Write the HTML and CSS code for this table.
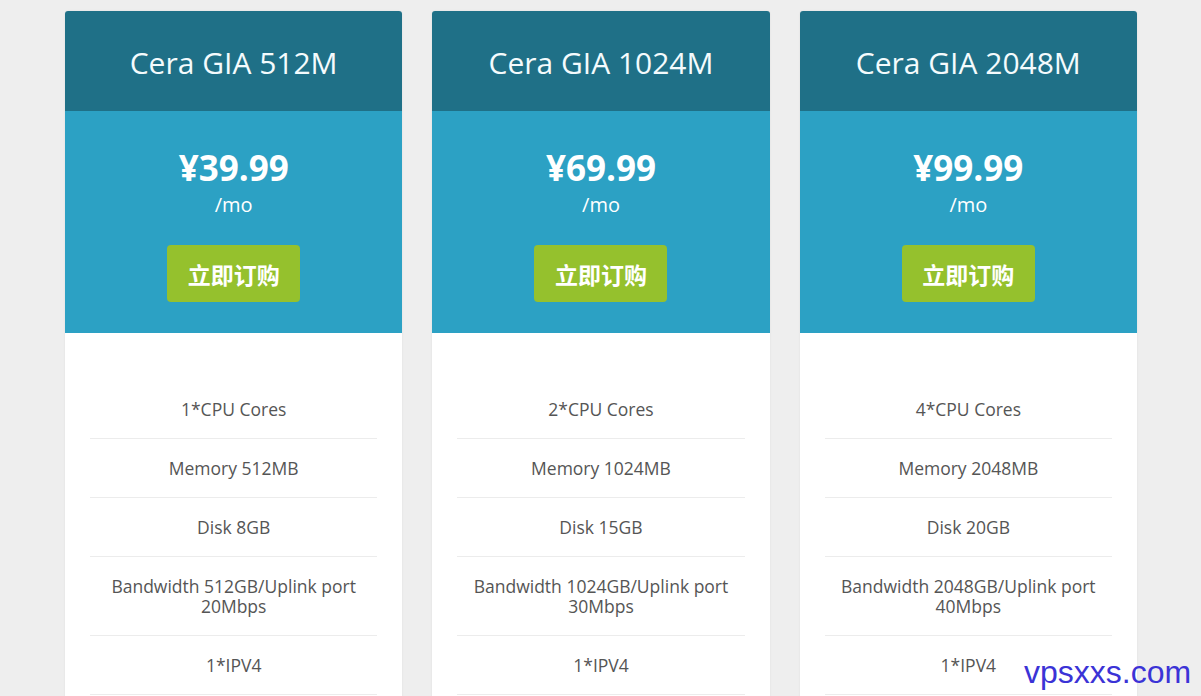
FILE: index.html
```html
<!DOCTYPE html>
<html lang="zh">
<head>
<meta charset="utf-8">
<title>Cera GIA</title>
<link rel="stylesheet" href="styles.css">
</head>
<body>
<div class="plans">
  <div class="card">
    <div class="card-head">Cera GIA 512M</div>
    <div class="card-price">
      <div class="price">¥39.99</div>
      <div class="period">/mo</div>
      <a class="buy">立即订购</a>
    </div>
    <ul class="features">
      <li>1*CPU Cores</li>
      <li>Memory 512MB</li>
      <li>Disk 8GB</li>
      <li>Bandwidth 512GB/Uplink port<br>20Mbps</li>
      <li>1*IPV4</li>
      <li>&nbsp;</li>
    </ul>
  </div>
  <div class="card">
    <div class="card-head">Cera GIA 1024M</div>
    <div class="card-price">
      <div class="price">¥69.99</div>
      <div class="period">/mo</div>
      <a class="buy">立即订购</a>
    </div>
    <ul class="features">
      <li>2*CPU Cores</li>
      <li>Memory 1024MB</li>
      <li>Disk 15GB</li>
      <li>Bandwidth 1024GB/Uplink port<br>30Mbps</li>
      <li>1*IPV4</li>
      <li>&nbsp;</li>
    </ul>
  </div>
  <div class="card">
    <div class="card-head">Cera GIA 2048M</div>
    <div class="card-price">
      <div class="price">¥99.99</div>
      <div class="period">/mo</div>
      <a class="buy">立即订购</a>
    </div>
    <ul class="features">
      <li>4*CPU Cores</li>
      <li>Memory 2048MB</li>
      <li>Disk 20GB</li>
      <li>Bandwidth 2048GB/Uplink port<br>40Mbps</li>
      <li>1*IPV4</li>
      <li>&nbsp;</li>
    </ul>
  </div>
</div>
<div class="watermark">vpsxxs.com</div>
</body>
</html>
```

FILE: styles.css
```css
html, body {
  margin: 0;
  padding: 0;
  background: #eeeeee;
  height: 696px;
  overflow: hidden;
}
body {
  font-family: "Open Sans", "Noto Sans", sans-serif;
  position: relative;
}
.plans {
  display: grid;
  grid-template-columns: repeat(3, 1fr);
  gap: 30px;
  width: 1072px;
  margin-left: 65px;
  padding-top: 11px;
}
.card {
  background: #ffffff;
  border-radius: 3px 3px 0 0;
  box-shadow: 0 0 2px rgba(0, 0, 0, 0.08);
}
.card-head {
  height: 100px;
  background: #1f7087;
  color: #f4fbfd;
  border-radius: 3px 3px 0 0;
  font-size: 30px;
  display: flex;
  align-items: center;
  justify-content: center;
  padding-top: 2px;
  box-sizing: border-box;
}
.card-price {
  background: #2ca1c4;
  color: #ffffff;
  text-align: center;
  padding: 37px 0 31px;
  display: flex;
  flex-direction: column;
  align-items: center;
}
.price {
  font-size: 35px;
  font-weight: 700;
  line-height: 40px;
}
.period {
  margin-top: 5px;
  font-size: 20px;
  line-height: 24px;
}
.buy {
  margin-top: 28px;
  width: 133px;
  height: 57px;
  background: #95c12d;
  border-radius: 4px;
  color: #ffffff;
  font-family: "Noto Sans CJK SC", sans-serif;
  font-weight: 700;
  font-size: 23px;
  display: flex;
  align-items: center;
  justify-content: center;
}
.features {
  list-style: none;
  margin: 0;
  padding: 47px 25px 0;
}
.features li {
  padding: 19px 0;
  line-height: 20px;
  font-size: 17.5px;
  color: #555555;
  text-align: center;
  border-bottom: 1px solid #ececec;
}
.watermark {
  position: absolute;
  left: 1024px;
  top: 654px;
  font-family: "Liberation Sans", Arial, sans-serif;
  font-size: 32px;
  color: #3b33d6;
}
```
